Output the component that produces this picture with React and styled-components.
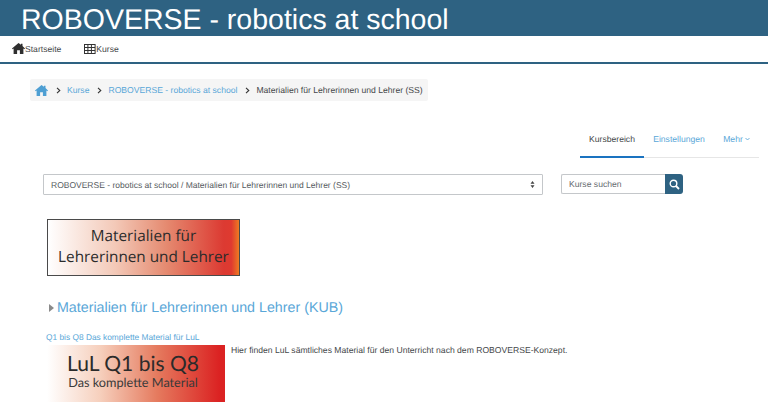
import React from "react";
import styled, { createGlobalStyle } from "styled-components";

const Global = createGlobalStyle`
  html, body { margin: 0; padding: 0; background: #fff; }
  body { font-family: "Liberation Sans", Arial, sans-serif; font-size: 8.6px; color: #45484a; width: 768px; height: 420px; overflow: hidden; text-rendering: geometricPrecision; -webkit-font-smoothing: antialiased; }
`;

const Header = styled.header`
  height: 36px; background: #2e6282; color: #fff; padding-left: 21px;
  font-size: 28.5px; line-height: 40px; overflow: hidden; white-space: nowrap;
`;
const Nav = styled.nav`
  border-bottom: 2px solid #2e6282; display: flex; align-items: center;
  padding: 0 0 2px 12px; height: 23px; gap: 23px; margin-top: 1px;
`;
const NavItem = styled.span`
  display: flex; align-items: center; color: #45484a; font-size: 8.6px;
`;
const Main = styled.main`
  padding: 15px 9px 0 30px; display: flex; flex-direction: column;
`;
const Crumbs = styled.div`
  width: 398px; height: 22px; box-sizing: border-box; background: #f5f5f5; display: flex;
  align-items: center; padding-left: 5px; border-radius: 2px; white-space: nowrap;
`;
const Crumb = styled.span`
  color: ${p => (p.$current ? "#45484a" : "#5aa7d8")};
`;
const HomeIcon = styled.svg`
  flex: none; width: 13px; height: 11px;
`;
const Sep = styled.svg`
  width: 5px; height: 7px; margin: 0 6px 0 8px; flex: none;
`;
const Tabs = styled.div`
  display: flex; margin-top: 26px; margin-left: 550px; border-bottom: 1px solid #e6e6e6; height: 30px;
`;
const Tab = styled.div`
  box-sizing: border-box; width: ${p => p.$w}px; height: 31px; display: flex; justify-content: center; align-items: center;
  padding-bottom: 6px; gap: 2px;
  color: ${p => (p.$active ? "#45484a" : "#5aa7d8")};
  border-bottom: 2px solid ${p => (p.$active ? "#1a73c0" : "transparent")};
`;
const SearchRow = styled.div`
  display: flex; align-items: flex-start; margin: 16px 0 0 13px;
`;
const Select = styled.div`
  box-sizing: border-box; width: 500px; height: 21px; border: 1px solid #c4c7ca; display: flex; align-items: center;
  justify-content: space-between; padding: 0 7px; color: #555a5e; border-radius: 1px; background: #fff; font-size: 8.5px;
`;
const Updown = styled.svg`
  width: 5px; height: 7px; display: block;
`;
const Input = styled.div`
  box-sizing: border-box; width: 104px; height: 20px; margin-left: 18px; border: 1px solid #c4c7ca; border-right: 0;
  display: flex; align-items: center; padding-left: 7px; color: #666b70; border-radius: 2px 0 0 2px;
`;
const SearchBtn = styled.div`
  width: 18px; height: 20px; background: #2e6282; border-radius: 0 3px 3px 0; display: flex; align-items: center; justify-content: center;
`;
const Banner = styled.div`
  box-sizing: border-box; width: 193px; height: 57px; margin: 24px 0 0 17px; border: 1px solid #4a4a4a;
  background: linear-gradient(90deg, #fff 0%, #f3c9b8 35%, #e58a70 62%, #dc3a32 92%, #df3a30 96%, #ee7a22 100%);
  display: flex; flex-direction: column; align-items: center; justify-content: center;
  color: #2b2b2b; font-family: "Open Sans", sans-serif; font-size: 15.3px; line-height: 21px; text-align: center; padding-bottom: 2px;
`;
const Section = styled.h3`
  margin: 22px 0 0 17px; display: flex; align-items: center; font-weight: 400; font-size: 14.25px; line-height: 20px; color: #5aa7d8; gap: 3px;
`;
const Caret = styled.span`
  width: 0; height: 0; border-left: 5px solid #8a8a8a; border-top: 4px solid transparent; border-bottom: 4px solid transparent; margin-left: 2px;
`;
const ResLink = styled.div`
  margin: 13px 0 0 16px; color: #5aa7d8; line-height: 12px; font-size: 8.35px;
`;
const Resource = styled.div`
  display: flex; margin: 2px 0 0 17px; gap: 6px;
`;
const Pic = styled.div`
  width: 178px; height: 57px; flex: none; background: linear-gradient(90deg, #fff 0%, #f6cfbc 30%, #e57a5e 62%, #db2222 97%);
  display: flex; flex-direction: column; align-items: center; font-family: "Lato", sans-serif; color: #2b2b2b; padding: 7px 6px 0 0; box-sizing: border-box;
`;
const PicTitle = styled.div`
  font-size: 21px; line-height: 23px;
`;
const PicSub = styled.div`
  font-size: 12.7px; line-height: 14px; color: #3a3a3a; margin-top: 0;
`;
const Desc = styled.div`
  line-height: 10px; color: #45484a; font-size: 8.6px;
`;

const Chevron = () => (
  <Sep viewBox="0 0 5 7"><path d="M1 .8 3.800 3.500 1 6.200" fill="none" stroke="#333" strokeWidth="1.100" /></Sep>
);

const HOUSE = "M6.500 0 0 5.600l.6.7 1-.8V11h3.500V7.300h2.800V11h3.500V5.500l1 .8.6-.7L10.500 3V.8H9v1z";

export default function App() {
  return (
    <>
      <Global />
      <Header>ROBOVERSE - robotics at school</Header>
      <Nav>
        <NavItem>
          <HomeIcon viewBox="0 0 13 11"><path d={HOUSE} fill="#2f2f2f" /></HomeIcon>
          Startseite
        </NavItem>
        <NavItem>
          <svg width="12" height="10" viewBox="0 0 12 10"><rect x=".5" y=".5" width="10.600" height="9" fill="#fff" stroke="#333" /><path d="M0 3.500h11M0 6.500h11M3.900 0v10M7.400 0v10" stroke="#333" /></svg>
          Kurse
        </NavItem>
      </Nav>
      <Main>
        <Crumbs>
          <HomeIcon viewBox="0 0 13 11"><path d={HOUSE} fill="#4e9fd3" /></HomeIcon>
          <Chevron />
          <Crumb>Kurse</Crumb>
          <Chevron />
          <Crumb>ROBOVERSE - robotics at school</Crumb>
          <Chevron />
          <Crumb $current>Materialien für Lehrerinnen und Lehrer (SS)</Crumb>
        </Crumbs>
        <Tabs>
          <Tab $active $w={64}>Kursbereich</Tab>
          <Tab $w={70}>Einstellungen</Tab>
          <Tab $w={45}>
            Mehr
            <svg width="5" height="4" viewBox="0 0 5 4"><path d="M.5 1 2.500 3 4.500 1" fill="none" stroke="#4e9fd3" strokeWidth=".8" /></svg>
          </Tab>
        </Tabs>
        <SearchRow>
          <Select>
            ROBOVERSE - robotics at school / Materialien für Lehrerinnen und Lehrer (SS)
            <Updown viewBox="0 0 5 7"><path d="M2.500 0 4.500 2.800H.5zM2.500 7 .5 4.200h4z" fill="#444" /></Updown>
          </Select>
          <Input>Kurse suchen</Input>
          <SearchBtn>
            <svg width="11" height="11" viewBox="0 0 11 11"><circle cx="4.500" cy="4.500" r="3.300" fill="none" stroke="#fff" strokeWidth="1.400" /><path d="M7 7l3 3" stroke="#fff" strokeWidth="1.800" /></svg>
          </SearchBtn>
        </SearchRow>
        <Banner>
          <span>Materialien für</span>
          <span>Lehrerinnen und Lehrer</span>
        </Banner>
        <Section><Caret />Materialien für Lehrerinnen und Lehrer (KUB)</Section>
        <ResLink>Q1 bis Q8 Das komplette Material für LuL</ResLink>
        <Resource>
          <Pic>
            <PicTitle>LuL Q1 bis Q8</PicTitle>
            <PicSub>Das komplette Material</PicSub>
          </Pic>
          <Desc>Hier finden LuL sämtliches Material für den Unterricht nach dem ROBOVERSE-Konzept.</Desc>
        </Resource>
      </Main>
    </>
  );
}
